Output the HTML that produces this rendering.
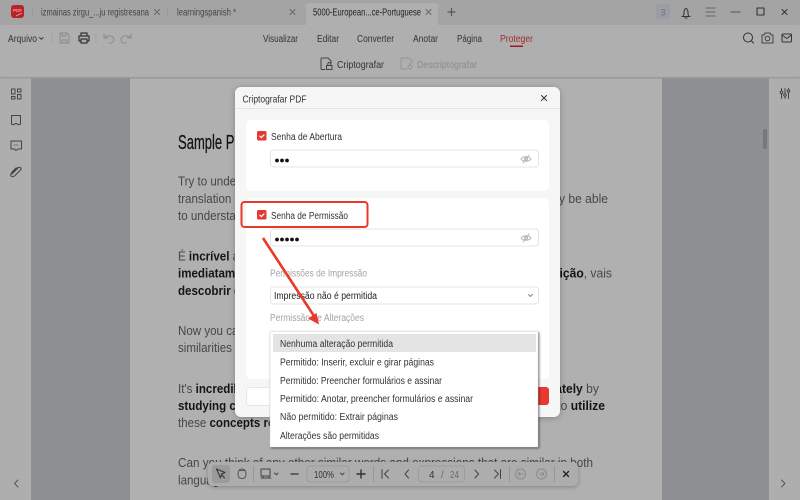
<!DOCTYPE html>
<html><head><meta charset="utf-8"><style>
html,body{margin:0;padding:0;width:800px;height:500px;overflow:hidden;background:#aeaeae}
svg{display:block;filter:blur(.35px)}
text{font-family:"Liberation Sans",sans-serif;font-size:10px;fill:#333}
.b{font-size:13px;fill:#474747}
.b tspan.k{font-weight:bold;fill:#151515}
.i{fill:none;stroke:#3a3a3a;stroke-width:1;stroke-linecap:round;stroke-linejoin:round}
.d{stroke:#8b8b8b}
.g{fill:#a3a3a3;font-size:10px}
</style></head><body>
<svg width="800" height="500" viewBox="0 0 800 500" xmlns="http://www.w3.org/2000/svg">
<!-- chrome -->
<rect width="800" height="25" fill="#a4a4a4"/>
<rect x="0" y="25" width="800" height="53" rx="5" fill="#afafaf"/>
<path d="M306 25V7q0-4 4-4h124q4 0 4 4v18z" fill="#afafaf"/>
<rect y="77" width="800" height="1.5" fill="#999"/>
<rect y="78.500" width="31" height="422" fill="#aeaeae"/>
<rect x="769" y="78.500" width="31" height="422" fill="#aeaeae"/>
<rect x="31" y="78.500" width="738" height="422" fill="#8e8f93"/>
<rect x="130" y="78.500" width="532" height="422" fill="#b0b0b0"/>
<rect x="763" y="129" width="4" height="20" rx="2" fill="#77787b"/>

<!-- logo & tabs -->
<rect x="11" y="5" width="13" height="13" rx="3" fill="#b8232b"/>
<text x="13" y="12" style="font-size:4.500px;font-weight:bold;fill:#e8a0a0">PDF</text>
<path d="M16 16l6-3" stroke="#e8a0a0" stroke-width=".8"/>
<path d="M32.500 7v10M167.500 7v10" stroke="#979797"/>
<text x="41" y="15.500" textLength="108" lengthAdjust="spacingAndGlyphs" style="fill:#444">izmainas zirgu_...ju registresana</text>
<path class="i" d="M154.500 9.500l5 5M159.500 9.500l-5 5M290 9.500l5 5M295 9.500l-5 5M426 9.500l5 5M431 9.500l-5 5" style="stroke:#666"/>
<text x="177" y="15.500" textLength="59" lengthAdjust="spacingAndGlyphs" style="fill:#444">learningspanish *</text>
<text x="313" y="15.500" textLength="108" lengthAdjust="spacingAndGlyphs" style="fill:#1e1e1e">5000-European...ce-Portuguese</text>
<path class="i" d="M448 12h7M451.500 8.500v7" style="stroke:#555;stroke-width:1.200"/>
<!-- window controls -->
<rect x="656" y="4" width="14" height="15" rx="3" fill="#9a9da6"/>
<text x="660.500" y="15.500" style="fill:#6d7079;font-size:9px">3</text>
<path class="i" d="M682 16.500h8M683 16.500c1-1 1-2 1-4 0-2 1-4 2-4s2 2 2 4c0 2 0 3 1 4M685 18h2" style="stroke:#333"/>
<path class="i" d="M706 8h9M706 12h9M706 16h9" style="stroke:#666"/>
<path class="i" d="M731 12h9" style="stroke:#666;stroke-width:1.200"/>
<rect class="i" x="757" y="8" width="7" height="7" style="stroke:#333;stroke-width:1.100"/>
<path class="i" d="M782 9.500l5 5M787 9.500l-5 5" style="stroke:#333"/>

<!-- toolbar row -->
<text x="8" y="42" textLength="29" lengthAdjust="spacingAndGlyphs">Arquivo</text>
<path class="i" d="M39.500 37.500l1.800 1.800 1.800-1.800"/>
<path d="M52 33v10M96 33v10" stroke="#a0a0a0"/>
<path class="i d" d="M60 33h7l2 2v8h-9zM62 33v3h4v-3M62 43v-3h5v3"/>
<path class="i" d="M81 36v-3h6v3M80 41h-1v-5h10v5h-1M81 39h6v4h-6z" style="stroke-width:1.200;stroke:#333"/>
<path class="i d" d="M104 34v4h4M104 38c2-3 9-3 10 1 0 2-1 4-3 4h-2"/>
<path class="i d" d="M131 34v4h-4M131 38c-2-3-9-3-10 1 0 2 1 4 3 4h2"/>
<text x="263" y="42" textLength="35" lengthAdjust="spacingAndGlyphs">Visualizar</text>
<text x="317" y="42" textLength="22" lengthAdjust="spacingAndGlyphs">Editar</text>
<text x="357" y="42" textLength="37" lengthAdjust="spacingAndGlyphs">Converter</text>
<text x="413" y="42" textLength="25" lengthAdjust="spacingAndGlyphs">Anotar</text>
<text x="457" y="42" textLength="25" lengthAdjust="spacingAndGlyphs">Página</text>
<text x="500" y="42" textLength="33" lengthAdjust="spacingAndGlyphs" style="fill:#a52a2e">Proteger</text>
<rect x="510" y="45.500" width="13" height="1.500" fill="#a8161c"/>
<circle class="i" cx="748" cy="37.500" r="4.500" style="stroke:#333"/><path class="i" d="M751.500 41l2 2" style="stroke:#333"/>
<path class="i" d="M762 35h2l1-2h5l1 2h2v8h-11z" style="stroke:#444"/><circle class="i" cx="767.500" cy="38.500" r="2.300" style="stroke:#444"/>
<rect class="i" x="782" y="34" width="9.500" height="8" rx="1" style="stroke:#333"/><path class="i" d="M782 35l4.800 3.500 4.700-3.500" style="stroke:#333"/>
<path class="i" d="M325 69.500h-3a1 1 0 0 1-1-1v-9.500a1 1 0 0 1 1-1h6l3 3v2" style="stroke:#444"/>
<rect class="i" x="326.500" y="65.500" width="5.500" height="4" style="stroke:#444"/><path class="i" d="M327.800 65.500v-1.500a1.500 1.500 0 0 1 3 0v1.500" style="stroke:#444"/>
<text x="337" y="68" textLength="47" lengthAdjust="spacingAndGlyphs">Criptografar</text>
<path class="i" d="M407 69h-5a1 1 0 0 1-1-1v-9a1 1 0 0 1 1-1h7l3 3v2" style="stroke:#949494"/>
<circle class="i" cx="410" cy="67" r="2" style="stroke:#949494"/><path class="i" d="M410 65v-2" style="stroke:#949494"/>
<text x="417" y="68" textLength="60" lengthAdjust="spacingAndGlyphs" style="fill:#8b8b8b">Descriptografar</text>

<!-- sidebars -->
<path class="i" d="M11.500 89h3.500v5h-3.500zM17.500 89h3.500v3h-3.500zM11.500 96.500h3.500v2.500h-3.500zM17.500 94.500h3.500v4.500h-3.500z" style="stroke:#444"/>
<path class="i" d="M11.500 115.500h9v8.500l-1.500 .8-3-1.300-3 1.300-1.500-.8z" style="stroke:#444"/>
<path class="i" d="M11 141h10.500v8h-3.500l-2 1.500-1.500-1.500H11z" style="stroke:#444"/><path d="M13.500 145h5" stroke="#777"/>
<path class="i" d="M12 174l6-6c2-2 4 .5 2.500 2l-6 6c-3 2-5-1-3-3l6-5.500M16 168l-4 4" style="stroke:#444"/>
<path class="i" d="M781.500 88.500v2M781.500 94v4.500M785 88.500v5M785 96.500v2M788.500 88.500v1M788.500 93v5.500" style="stroke:#444"/>
<circle class="i" cx="781.500" cy="92.300" r="1.300" style="stroke:#444"/><circle class="i" cx="785" cy="95" r="1.300" style="stroke:#444"/><circle class="i" cx="788.500" cy="91" r="1.300" style="stroke:#444"/>
<path class="i" d="M18 480l-3.500 3.500 3.500 3.500" style="stroke:#555"/>
<path class="i" d="M781.500 480l3.500 3.500-3.500 3.500" style="stroke:#555"/>

<!-- page content -->
<text x="178" y="149" textLength="56.500" lengthAdjust="spacingAndGlyphs" style="font-size:20px;fill:#141414;stroke:#141414;stroke-width:.25">Sample P</text>
<g transform="translate(178,0) scale(.89,1)">
<text class="b" x="0" y="185.500">Try to understand these</text>
<text class="b" x="0" y="203">translation of these</text>
<text class="b" x="0" y="220">to understand these</text>
<text class="b" x="0" y="260.500">É <tspan class="k">incrível</tspan> a quantidade</text>
<text class="b" x="0" y="277.500"><tspan class="k">imediatamente</tspan></text>
<text class="b" x="0" y="295"><tspan class="k">descobrir</tspan> que</text>
<text class="b" x="0" y="335">Now you can see the</text>
<text class="b" x="0" y="352">similarities between</text>
<text class="b" x="0" y="393">It's <tspan class="k">incredible</tspan></text>
<text class="b" x="0" y="410"><tspan class="k">studying cognates</tspan></text>
<text class="b" x="0" y="427">these <tspan class="k">concepts really</tspan></text>
<text class="b" x="0" y="484.500">languages?</text>
</g>
<text class="b" x="178" y="467" textLength="415" lengthAdjust="spacingAndGlyphs">Can you think of any other similar words and expressions that are similar in both</text>
<g transform="scale(.93,1)">
<text class="b" x="653.800" y="203" text-anchor="end">they may be able</text>
<text class="b" x="658" y="277.500" text-anchor="end"><tspan class="k">edição</tspan>, vais</text>
<text class="b" x="644" y="393" text-anchor="end"><tspan class="k">immediately</tspan> by</text>
<text class="b" x="650.500" y="410" text-anchor="end">to <tspan class="k">utilize</tspan></text>
</g>

<!-- dialog -->
<rect x="235" y="87" width="325" height="330" rx="6" fill="#f6f6f6" style="filter:drop-shadow(0 1px 3px rgba(0,0,0,.25))"/>
<rect x="235" y="108" width="325" height="1" fill="#e4e4e4"/>
<text x="242.500" y="102.500" textLength="64" lengthAdjust="spacingAndGlyphs">Criptografar PDF</text>
<path class="i" d="M541.500 95.500l5 5M546.500 95.500l-5 5" style="stroke:#333"/>
<rect x="246" y="120" width="303" height="71" rx="5" fill="#fff"/>
<rect x="246" y="198" width="303" height="181" rx="5" fill="#fff"/>
<rect x="257" y="131" width="9.500" height="9.500" rx="1.500" fill="#e53a30"/><path d="M259.500 135.800l1.800 1.800 3-3" fill="none" stroke="#fff" stroke-width="1.200"/>
<text x="271" y="140" textLength="71" lengthAdjust="spacingAndGlyphs">Senha de Abertura</text>
<rect x="270.500" y="150" width="268" height="17" rx="3" fill="#fff" stroke="#e4e4e4"/>
<g fill="#111"><circle cx="277" cy="160.500" r="1.900"/><circle cx="282" cy="160.500" r="1.900"/><circle cx="287" cy="160.500" r="1.900"/></g>
<path class="i" d="M521 159c2-3 8-3 10 0-2 3-8 3-10 0zM523 163l6-8" style="stroke:#b5b5b5"/><circle class="i" cx="526" cy="159" r="1.500" style="stroke:#b5b5b5"/>
<rect x="257" y="210" width="9.500" height="9.500" rx="1.500" fill="#e53a30"/><path d="M259.500 214.800l1.800 1.800 3-3" fill="none" stroke="#fff" stroke-width="1.200"/>
<text x="271" y="219" textLength="77" lengthAdjust="spacingAndGlyphs">Senha de Permissão</text>
<rect x="270.500" y="229" width="268" height="17" rx="3" fill="#fff" stroke="#e4e4e4"/>
<g fill="#111"><circle cx="277" cy="239.500" r="1.900"/><circle cx="282" cy="239.500" r="1.900"/><circle cx="287" cy="239.500" r="1.900"/><circle cx="292" cy="239.500" r="1.900"/><circle cx="297" cy="239.500" r="1.900"/></g>
<path class="i" d="M521 238c2-3 8-3 10 0-2 3-8 3-10 0zM523 242l6-8" style="stroke:#b5b5b5"/><circle class="i" cx="526" cy="238" r="1.500" style="stroke:#b5b5b5"/>
<text class="g" x="270" y="276.500" textLength="97" lengthAdjust="spacingAndGlyphs">Permissões de Impressão</text>
<rect x="270.500" y="287" width="268" height="17" rx="3" fill="#fff" stroke="#e4e4e4"/>
<text x="274" y="299" textLength="103" lengthAdjust="spacingAndGlyphs" style="fill:#222">Impressão não é permitida</text>
<path class="i" d="M528.500 294.500l2 2 2-2" style="stroke:#888"/>
<text class="g" x="270" y="321" textLength="94" lengthAdjust="spacingAndGlyphs">Permissão de Alterações</text>
<rect x="246.500" y="387.500" width="290" height="18" rx="3" fill="#fff" stroke="#e6e6e6"/>
<rect x="490" y="387" width="59" height="18" rx="3" fill="#e8392f"/>

<!-- red annotations -->
<rect x="241.500" y="202" width="126" height="25" rx="3" fill="none" stroke="#e8392b" stroke-width="2"/>

<!-- dropdown -->
<rect x="270" y="331.500" width="268" height="115.500" fill="#fff" stroke="#dcdcdc" stroke-width=".5" style="filter:drop-shadow(1.500px 1.500px 1px rgba(0,0,0,.55))"/>
<rect x="273" y="334" width="263" height="18" fill="#e4e4e4"/>
<text x="280" y="347" textLength="113" lengthAdjust="spacingAndGlyphs">Nenhuma alteração permitida</text>
<text x="280" y="365.500" textLength="154" lengthAdjust="spacingAndGlyphs">Permitido: Inserir, excluir e girar páginas</text>
<text x="280" y="384" textLength="162" lengthAdjust="spacingAndGlyphs">Permitido: Preencher formulários e assinar</text>
<text x="280" y="402" textLength="193" lengthAdjust="spacingAndGlyphs">Permitido: Anotar, preencher formulários e assinar</text>
<text x="280" y="420" textLength="118" lengthAdjust="spacingAndGlyphs">Não permitido: Extrair páginas</text>
<text x="280" y="439" textLength="99" lengthAdjust="spacingAndGlyphs">Alterações são permitidas</text>

<path d="M263 238L314 316" stroke="#e8392b" stroke-width="2.600" fill="none"/>
<path d="M319 324.500l-11-6 8.500-5.500z" fill="#e8392b"/>

<!-- bottom toolbar -->
<rect x="208" y="462" width="370" height="24" rx="5" fill="#adadad" style="filter:drop-shadow(0 1px 2px rgba(0,0,0,.25))"/>
<rect x="212" y="465" width="18" height="18" rx="3" fill="#9b9b9b"/>
<path class="i" d="M216.500 469l8.500 3.500-3.500 1.500-1 4z" style="stroke:#333"/><path class="i" d="M222 475l2.500 3" style="stroke:#333"/>
<path class="i" d="M238 474c0-3 1.500-5 4-5s4 2 4 5-1.500 4.500-4 4.500-4-1.500-4-4.500zM239.500 470.500h5" style="stroke:#555"/>
<path d="M253.500 466v16M373.500 466v16M509.500 466v16M554.500 466v16" stroke="#979797"/>
<rect class="i" x="261" y="469" width="9" height="7" style="stroke:#444"/><path class="i" d="M261 478h10M263 478v-2M269 478v-2" style="stroke:#444"/>
<path class="i" d="M274.500 473l1.800 1.800 1.800-1.800" style="stroke:#444"/>
<path class="i" d="M291 474h7" style="stroke:#444;stroke-width:1.400"/>
<rect x="307" y="466" width="42" height="16" rx="3" fill="none" stroke="#9d9d9d"/>
<text x="314" y="478" textLength="20" lengthAdjust="spacingAndGlyphs">100%</text>
<path class="i" d="M340.500 473l1.800 1.800 1.800-1.800" style="stroke:#444"/>
<path class="i" d="M357 474h8M361 470v8" style="stroke:#333;stroke-width:1.400"/>
<path class="i" d="M382 469.500v9M388.500 470l-4 4 4 4M408.500 470l-3.500 4 3.500 4" style="stroke:#444"/>
<rect x="418.500" y="466" width="46" height="16" rx="3" fill="none" stroke="#9d9d9d"/>
<text x="429" y="478" style="fill:#333">4</text><text x="441" y="478" style="fill:#6a6a6a">/</text><text x="450" y="478" textLength="9" lengthAdjust="spacingAndGlyphs" style="fill:#6a6a6a">24</text>
<path class="i" d="M475 470l3.500 4-3.500 4M494.500 470l4 4-4 4M500.500 469.500v9" style="stroke:#444"/>
<circle class="i d" cx="520.500" cy="474" r="5"/><path class="i d" d="M523 474h-5M520 472l-2 2 2 2"/>
<circle class="i d" cx="541.500" cy="474" r="5"/><path class="i d" d="M539 474h5M542 472l2 2-2 2"/>
<path class="i" d="M563.500 471.500l5 5M568.500 471.500l-5 5" style="stroke:#222;stroke-width:1.300"/>
</svg>
</body></html>
